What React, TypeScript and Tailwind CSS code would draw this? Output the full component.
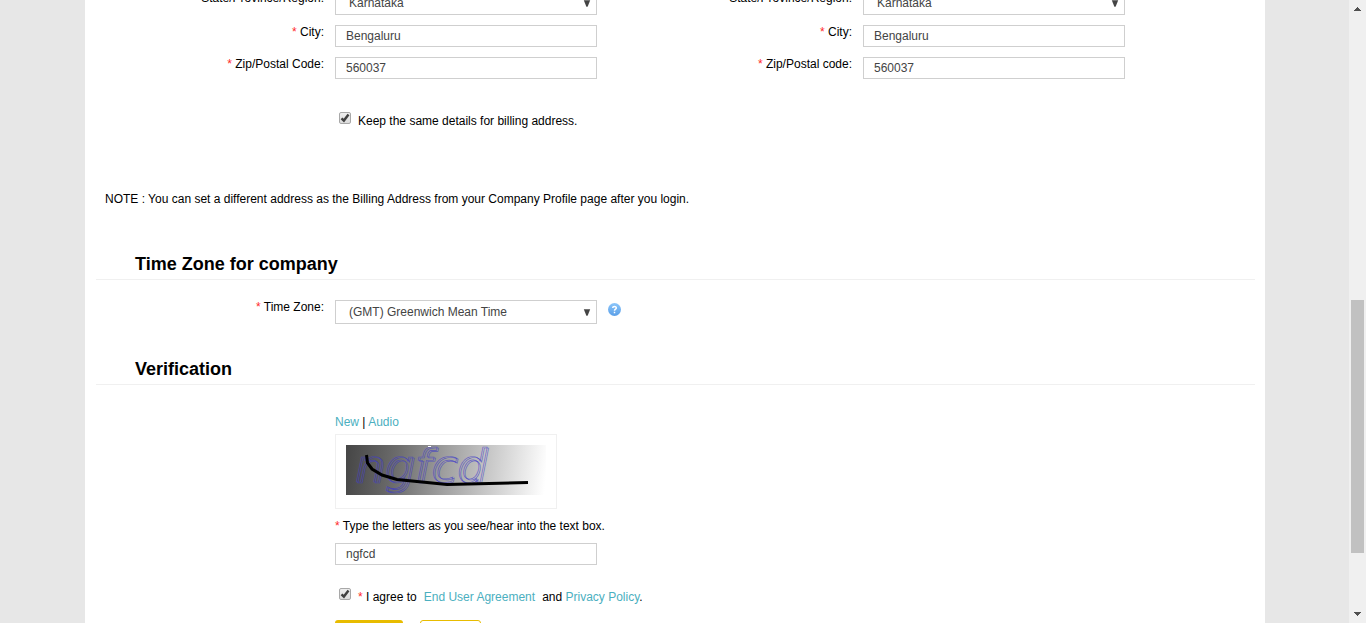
import React, { useId } from "react";

const inputClass =
  "block h-[22px] w-[262px] rounded-none border border-[#cfcfcf] bg-white px-2.5 text-[12px] text-[#444] outline-none";

function Star() {
  return <span className="text-[#ff2a2a]">*</span>;
}

function Field({
  label,
  children,
}: {
  label: string;
  children: (id: string) => React.ReactNode;
}) {
  const id = useId();
  return (
    <div className="flex items-start gap-[11px]">
      <label htmlFor={id} className="w-[228px] shrink-0 text-right">
        <Star /> {label}
      </label>
      {children(id)}
    </div>
  );
}

function Select({ id, value }: { id: string; value: string }) {
  return (
    <div className="grid w-[262px]">
      <select
        id={id}
        defaultValue={value}
        className="col-start-1 row-start-1 h-6 w-full appearance-none rounded-none border border-[#cfcfcf] bg-white pr-5 pl-[13px] text-[12px] text-[#444] outline-none"
      >
        <option>{value}</option>
      </select>
      <svg
        viewBox="0 0 8 7"
        className="pointer-events-none col-start-1 row-start-1 mr-1.5 h-[7px] w-2 self-center justify-self-end"
      >
        <path d="M0.8 0.3H7.2L4.6 6.7H3.4Z" fill="#444" />
      </svg>
    </div>
  );
}

function Checkbox({ id }: { id: string }) {
  return (
    <span className="grid size-3 shrink-0">
      <input
        id={id}
        type="checkbox"
        defaultChecked
        className="peer col-start-1 row-start-1 size-3 appearance-none rounded-[2px] border border-[#a8a8a8] bg-linear-to-b from-[#eeeeee] to-[#dcdcdc]"
      />
      <svg
        viewBox="0 0 12 12"
        className="pointer-events-none invisible col-start-1 row-start-1 size-3 peer-checked:visible"
      >
        <path d="M2.5 6.3L4.9 8.6L9.5 2.6" fill="none" stroke="#404040" strokeWidth="2.4" />
      </svg>
    </span>
  );
}

function Address({ zipLabel }: { zipLabel: string }) {
  return (
    <div className="flex flex-col gap-2.5">
      <Field label="State/Province/Region:">{(id) => <Select id={id} value="Karnataka" />}</Field>
      <Field label="City:">
        {(id) => <input id={id} type="text" defaultValue="Bengaluru" className={inputClass} />}
      </Field>
      <Field label={zipLabel}>
        {(id) => <input id={id} type="text" defaultValue="560037" className={inputClass} />}
      </Field>
    </div>
  );
}

function Heading({ children }: { children: React.ReactNode }) {
  return (
    <h2 className="border-b border-[#f0f0f0] pb-[5px] pl-[39px] text-[18px] leading-5 font-bold">
      {children}
    </h2>
  );
}

function HelpIcon() {
  return (
    <svg viewBox="0 0 13 13" className="mt-[3px] size-[13px]" role="img" aria-label="Help">
      <defs>
        <linearGradient id="help" x1="0" y1="0" x2="0" y2="1">
          <stop offset="0" stopColor="#8cc6fa" />
          <stop offset="1" stopColor="#5a9fe8" />
        </linearGradient>
      </defs>
      <circle cx="6.5" cy="6.5" r="6.5" fill="url(#help)" />
      <path
        d="M4.7 5C4.7 3.2 8.3 3.1 8.3 5C8.3 6.2 6.5 6.2 6.5 7.8M6.5 8.8V10.2"
        fill="none"
        stroke="#fff"
        strokeWidth="1.5"
      />
    </svg>
  );
}

function Captcha() {
  return (
    <svg viewBox="0 0 200 50" className="h-[50px] w-[200px]" role="img" aria-label="Verification letters">
      <defs>
        <linearGradient id="shade" gradientUnits="userSpaceOnUse" x1="0" y1="10" x2="200" y2="34">
          <stop offset="0" stopColor="#464646" />
          <stop offset="0.25" stopColor="#6c6c6c" />
          <stop offset="0.5" stopColor="#a0a0a0" />
          <stop offset="0.75" stopColor="#cfcfcf" />
          <stop offset="1" stopColor="#ffffff" />
        </linearGradient>
      </defs>
      <rect width="200" height="50" fill="url(#shade)" />
      <g
        className="font-['DejaVu_Sans']"
        fontSize="47"
        fontStyle="italic"
        fill="none"
        stroke="#3f3bc8"
        strokeWidth="0.7"
        strokeOpacity="0.7"
      >
        <text x="9" y="36.5">ngfcd</text>
        <text x="10.5" y="37.5">ngfcd</text>
      </g>
      <path d="M82 1.5H85" stroke="#fff" />
      <path
        d="M20.5 10L21.5 18L26 24L36 30L51 34.5L101 39.5L182 37.5"
        fill="none"
        stroke="#000"
        strokeWidth="3"
      />
    </svg>
  );
}

function Link({ children }: { children: React.ReactNode }) {
  return (
    <a href="#" className="text-[#4bafc0]">
      {children}
    </a>
  );
}

function ScrollTrack() {
  return (
    <div className="flex w-[17px] shrink-0 flex-col bg-[#f0f0f0]" aria-hidden="true">
      <svg viewBox="0 0 17 17" className="h-[17px] w-[17px]" shapeRendering="crispEdges">
        <path d="M5 11L8.5 7L12 11Z" fill="#505050" />
      </svg>
      <div className="grow-[283] basis-0" />
      <div className="mx-0.5 grow-[253] basis-0 bg-[#c1c1c1]" />
      <div className="grow-[53] basis-0" />
      <svg viewBox="0 0 17 17" className="h-[17px] w-[17px]" shapeRendering="crispEdges">
        <path d="M5 6L8.5 10L12 6Z" fill="#505050" />
      </svg>
    </div>
  );
}

export default function App() {
  return (
    <div className="flex h-screen overflow-hidden bg-[#e7e7e7] font-['Liberation_Sans',Arial,sans-serif] text-[12px] leading-[14px] text-black">
      <div className="min-w-0 grow overflow-hidden pl-px">
        <main className="mx-auto -mt-[9px] min-h-full max-w-[1180px] bg-white pr-2.5 pb-10 pl-[11px]">
          <form onSubmit={(e) => e.preventDefault()}>
            <div className="grid max-w-[1056px] grid-cols-2">
              <Address zipLabel="Zip/Postal Code:" />
              <Address zipLabel="Zip/Postal code:" />
            </div>

            <div className="mt-[33px] ml-[243px] flex items-start gap-[7px]">
              <Checkbox id="same" />
              <label htmlFor="same" className="pt-0.5">
                Keep the same details for billing address.
              </label>
            </div>

            <p className="mt-16 pl-[9px]">
              NOTE : You can set a different address as the Billing Address from your Company Profile
              page after you login.
            </p>

            <section className="mt-12">
              <Heading>Time Zone for company</Heading>
              <div className="mt-5 flex items-start gap-[11px]">
                <Field label="Time Zone:">
                  {(id) => <Select id={id} value="(GMT) Greenwich Mean Time" />}
                </Field>
                <HelpIcon />
              </div>
            </section>

            <section className="mt-[35px]">
              <Heading>Verification</Heading>
              <div className="mt-[30px] ml-[239px]">
                <p>
                  <Link>New</Link> | <Link>Audio</Link>
                </p>
                <div className="mt-[5px] h-[75px] w-[222px] border border-[#f0f0f0] p-2.5">
                  <Captcha />
                </div>
                <label htmlFor="letters" className="mt-2.5 block">
                  <Star /> Type the letters as you see/hear into the text box.
                </label>
                <input
                  id="letters"
                  type="text"
                  defaultValue="ngfcd"
                  className={inputClass + " mt-2.5"}
                />
                <div className="mt-[23px] ml-1 flex items-start gap-[7px]">
                  <Checkbox id="agree" />
                  <p className="flex gap-[7px] pt-0.5">
                    <label htmlFor="agree">
                      <Star /> I agree to
                    </label>
                    <Link>End User Agreement</Link>
                    <span>
                      and <Link>Privacy Policy</Link>.
                    </span>
                  </p>
                </div>
                <div className="mt-4 flex gap-[17px]">
                  <button type="submit" className="h-7 w-[68px] rounded-[3px] bg-[#e8bc00] text-white">
                    Submit
                  </button>
                  <button
                    type="button"
                    className="h-7 w-[61px] rounded-[3px] border border-[#e8bc00] bg-white text-[#e8bc00]"
                  >
                    Cancel
                  </button>
                </div>
              </div>
            </section>
          </form>
        </main>
      </div>
      <ScrollTrack />
    </div>
  );
}
